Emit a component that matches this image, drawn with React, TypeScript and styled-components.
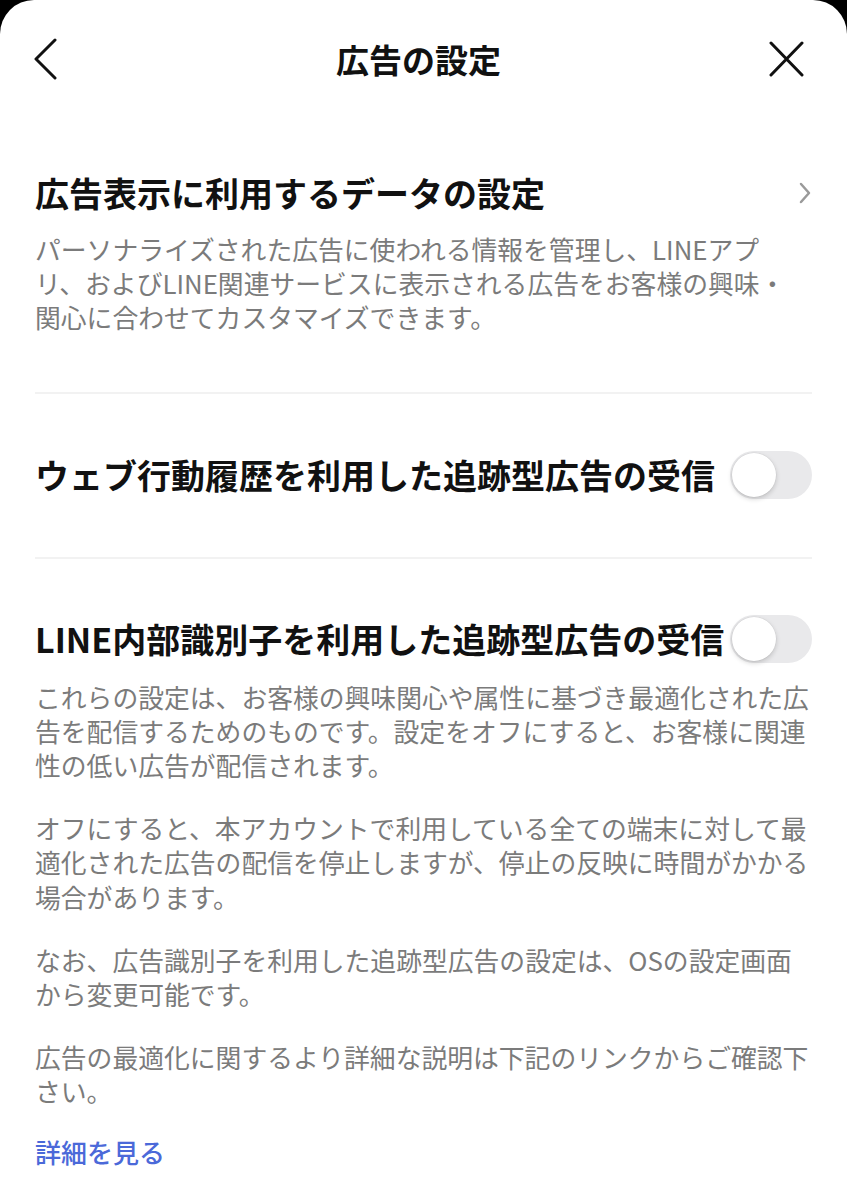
import styled, { createGlobalStyle } from "styled-components"

const GlobalStyle = createGlobalStyle`
    body {
        margin: 0;
        background: #000;
        font-family: "Noto Sans CJK JP", "Noto Sans", sans-serif;
    }
`

const Toggle = ({ on = false }: { on?: boolean }) => (
    <Track on={on}>
        <Knob on={on} />
    </Track>
)

export default function App() {
    return (
        <>
            <GlobalStyle />
            <Sheet>
                <Header>
                    <IconButton aria-label="戻る" align="start">
                        <svg width="30" height="42" viewBox="0 0 30 42">
                            <polyline points="22,2 3,21 22,40" fill="none" stroke="#111" strokeWidth="3" strokeLinecap="round" strokeLinejoin="round" />
                        </svg>
                    </IconButton>
                    <Title>広告の設定</Title>
                    <IconButton aria-label="閉じる" align="end">
                        <svg width="36" height="36" viewBox="0 0 36 36">
                            <path d="M3 2 L34 34 M34 2 L3 34" fill="none" stroke="#111" strokeWidth="3" strokeLinecap="round" />
                        </svg>
                    </IconButton>
                </Header>

                <Section pt={47} pb={57}>
                    <Row>
                        <ItemTitle>広告表示に利用するデータの設定</ItemTitle>
                        <svg width="14" height="22" viewBox="0 0 14 22">
                            <polyline points="3,2 11,11 3,20" fill="none" stroke="#9a9a9a" strokeWidth="2.5" strokeLinecap="round" strokeLinejoin="round" />
                        </svg>
                    </Row>
                    <Desc>
                        パーソナライズされた広告に使われる情報を管理し、LINEアプ<br />
                        リ、およびLINE関連サービスに表示される広告をお客様の興味・<br />
                        関心に合わせてカスタマイズできます。
                    </Desc>
                </Section>
                <Divider />

                <Section pt={57} pb={58}>
                    <Row>
                        <ItemTitle>ウェブ行動履歴を利用した追跡型広告の受信</ItemTitle>
                        <Toggle />
                    </Row>
                </Section>
                <Divider />

                <Section pt={56} pb={40}>
                    <Row>
                        <ItemTitle>LINE内部識別子を利用した追跡型広告の受信</ItemTitle>
                        <Toggle />
                    </Row>
                    <Desc>
                        これらの設定は、お客様の興味関心や属性に基づき最適化された広<br />
                        告を配信するためのものです。設定をオフにすると、お客様に関連<br />
                        性の低い広告が配信されます。
                    </Desc>
                    <Desc>
                        オフにすると、本アカウントで利用している全ての端末に対して最<br />
                        適化された広告の配信を停止しますが、停止の反映に時間がかかる<br />
                        場合があります。
                    </Desc>
                    <Desc>
                        なお、広告識別子を利用した追跡型広告の設定は、OSの設定画面<br />
                        から変更可能です。
                    </Desc>
                    <Desc>
                        広告の最適化に関するより詳細な説明は下記のリンクからご確認下<br />
                        さい。
                    </Desc>
                    <MoreLink href="#">詳細を見る</MoreLink>
                </Section>
            </Sheet>
        </>
    )
}

const Sheet = styled.div`
    min-height: 1200px;
    background: #fff;
    border-radius: 34px 34px 0 0;
    overflow: hidden;
`

const Header = styled.header`
    height: 124px;
    box-sizing: border-box;
    padding: 0 43px 6px 33px;
    display: grid;
    grid-template-columns: 1fr auto 1fr;
    align-items: center;
`

const IconButton = styled.button<{ align: "start" | "end" }>`
    justify-self: ${p => p.align};
    display: flex;
    align-items: center;
    justify-content: center;
    padding: 0;
    border: none;
    background: none;
`

const Title = styled.h1`
    margin: 0;
    font-size: 33px;
    font-weight: 700;
    color: #111;
    line-height: 1;
`

const Section = styled.section<{ pt: number; pb: number }>`
    padding: ${p => p.pt}px 35px ${p => p.pb}px;
`

const Row = styled.div`
    display: flex;
    align-items: center;
    justify-content: space-between;
    gap: 6px;
`

const ItemTitle = styled.h2`
    margin: 0;
    font-size: 34px;
    font-weight: 700;
    line-height: 44px;
    color: #111;
    white-space: nowrap;
`

const Desc = styled.p`
    margin: 17px 0 0;
    font-size: 25.8px;
    line-height: 34.2px;
    color: #7b7b7b;
    & + & {
        margin-top: 29px;
    }
`

const MoreLink = styled.a`
    display: block;
    margin-top: 26px;
    font-size: 26px;
    line-height: 34px;
    font-weight: 500;
    color: #4b69d9;
    text-decoration: none;
`

const Divider = styled.hr`
    margin: 0 35px;
    border: none;
    height: 2px;
    background: #f2f2f2;
`

const Track = styled.div<{ on: boolean }>`
    flex: none;
    width: 82px;
    height: 48px;
    border-radius: 24px;
    background: ${p => (p.on ? "#06c755" : "#e9e9eb")};
    display: flex;
    align-items: center;
    justify-content: ${p => (p.on ? "flex-end" : "flex-start")};
    padding: 0 2px;
    box-sizing: border-box;
`

const Knob = styled.div<{ on: boolean }>`
    width: 44px;
    height: 44px;
    border-radius: 50%;
    background: #fff;
    box-shadow: 0 2px 5px rgba(0, 0, 0, 0.18), 0 0 0 0.5px rgba(0, 0, 0, 0.06);
`
